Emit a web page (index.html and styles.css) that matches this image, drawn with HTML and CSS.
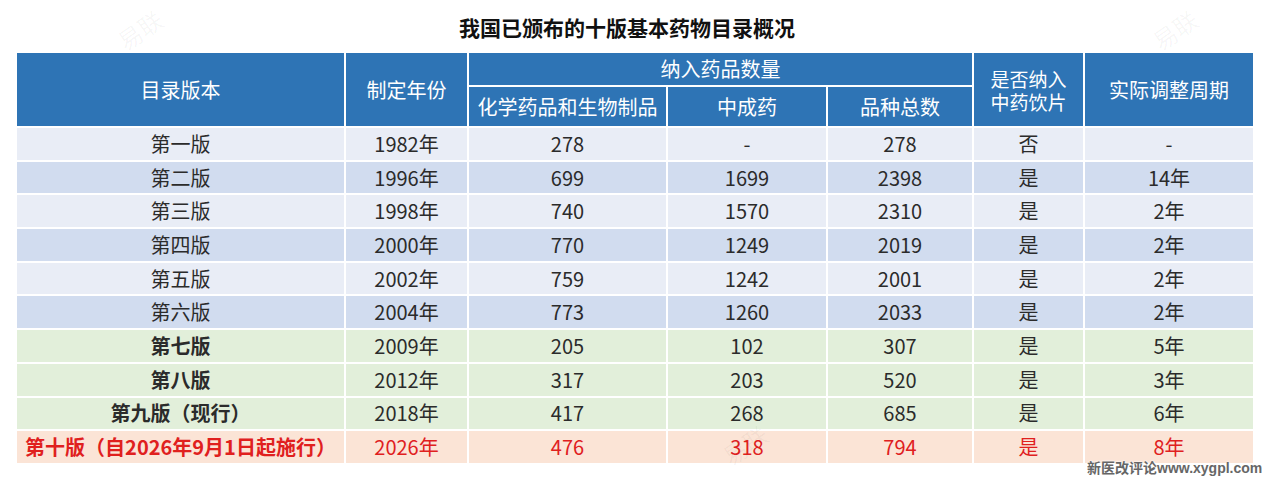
FILE: index.html
```html
<!DOCTYPE html>
<html lang="zh-CN">
<head>
<meta charset="utf-8">
<title>我国已颁布的十版基本药物目录概况</title>
<link rel="stylesheet" href="styles.css">
</head>
<body>
<div class="page">
  <h1 class="title">我国已颁布的十版基本药物目录概况</h1>
  <table class="catalog">
    <colgroup>
      <col style="width:329px">
      <col style="width:123px">
      <col style="width:199px">
      <col style="width:160px">
      <col style="width:146px">
      <col style="width:111px">
      <col style="width:170px">
    </colgroup>
    <thead>
      <tr class="head-top">
        <th rowspan="2">目录版本</th>
        <th rowspan="2">制定年份</th>
        <th colspan="3">纳入药品数量</th>
        <th rowspan="2" class="two-line"><span class="line">是否纳入</span><span class="line">中药饮片</span></th>
        <th rowspan="2">实际调整周期</th>
      </tr>
      <tr class="head-sub">
        <th>化学药品和生物制品</th>
        <th>中成药</th>
        <th>品种总数</th>
      </tr>
    </thead>
    <tbody>
      <tr class="blue-a"><td>第一版</td><td>1982年</td><td>278</td><td>-</td><td>278</td><td>否</td><td>-</td></tr>
      <tr class="blue-b"><td>第二版</td><td>1996年</td><td>699</td><td>1699</td><td>2398</td><td>是</td><td>14年</td></tr>
      <tr class="blue-a"><td>第三版</td><td>1998年</td><td>740</td><td>1570</td><td>2310</td><td>是</td><td>2年</td></tr>
      <tr class="blue-b"><td>第四版</td><td>2000年</td><td>770</td><td>1249</td><td>2019</td><td>是</td><td>2年</td></tr>
      <tr class="blue-a"><td>第五版</td><td>2002年</td><td>759</td><td>1242</td><td>2001</td><td>是</td><td>2年</td></tr>
      <tr class="blue-b"><td>第六版</td><td>2004年</td><td>773</td><td>1260</td><td>2033</td><td>是</td><td>2年</td></tr>
      <tr class="green"><td class="strong">第七版</td><td>2009年</td><td>205</td><td>102</td><td>307</td><td>是</td><td>5年</td></tr>
      <tr class="green"><td class="strong">第八版</td><td>2012年</td><td>317</td><td>203</td><td>520</td><td>是</td><td>3年</td></tr>
      <tr class="green"><td class="strong">第九版（现行）</td><td>2018年</td><td>417</td><td>268</td><td>685</td><td>是</td><td>6年</td></tr>
      <tr class="peach"><td class="strong">第十版（自2026年9月1日起施行）</td><td>2026年</td><td>476</td><td>318</td><td>794</td><td>是</td><td>8年</td></tr>
    </tbody>
  </table>
  <div class="mark mark-1"><span class="mark-text">易联</span></div>
  <div class="mark mark-2"><span class="mark-text">易联</span></div>
  <div class="mark mark-3"><span class="mark-text">易联</span></div>
  <div class="source">新医改评论<span class="url">www.xygpl.com</span></div>
</div>
</body>
</html>
```

FILE: styles.css
```css
html, body {
  margin: 0;
  padding: 0;
  background: #ffffff;
}

.page {
  position: relative;
  width: 1267px;
  height: 477px;
  overflow: hidden;
  font-family: "Noto Sans CJK SC", "Noto Sans", sans-serif;
  color: #2b2b2b;
}

.title {
  margin: 0;
  height: 51px;
  padding-right: 13px;
  padding-top: 2px;
  box-sizing: border-box;
  display: flex;
  align-items: center;
  justify-content: center;
  font-size: 21px;
  font-weight: 700;
  color: #111;
}

.catalog {
  margin-left: 15px;
  width: 1238px;
  border-collapse: collapse;
  table-layout: fixed;
  font-size: 20px;
}

.catalog th,
.catalog td {
  border: 2px solid #ffffff;
  padding: 0;
  text-align: center;
  vertical-align: middle;
  white-space: nowrap;
  line-height: 24px;
}

.catalog th {
  background: #2e74b5;
  color: #ffffff;
  font-weight: 400;
}

.head-top { height: 34px; }
.head-sub { height: 41px; }

.two-line {
  font-size: 19px;
}
.two-line .line {
  display: block;
  line-height: 23px;
}

.catalog tbody tr { height: 33.7px; }

.blue-a td { background: #e9edf6; }
.blue-b td { background: #d1dcef; }
.green td { background: #e2efda; }
.peach td { background: #fbe4d6; color: #e0201e; }

.strong { font-weight: 700; }

.mark {
  position: absolute;
  width: 80px;
  height: 60px;
  display: flex;
  align-items: center;
  justify-content: center;
  pointer-events: none;
}
.mark-text {
  display: block;
  font-size: 24px;
  line-height: 30px;
  color: rgba(0, 0, 0, 0.04);
  transform: rotate(-35deg);
}
.mark-1 { left: 100px; top: 0px; }
.mark-2 { left: 1135px; top: 0px; }
.mark-3 { left: 705px; top: 415px; }

.source {
  position: absolute;
  left: 1087px;
  top: 459px;
  font-size: 14px;
  line-height: 17px;
  color: #666;
  font-weight: 700;
  text-shadow: 0 0 2px #fff, 0 0 2px #fff;
  white-space: nowrap;
}
.source .url {
  font-family: "Liberation Sans", Arial, sans-serif;
  font-size: 14px;
}
```
